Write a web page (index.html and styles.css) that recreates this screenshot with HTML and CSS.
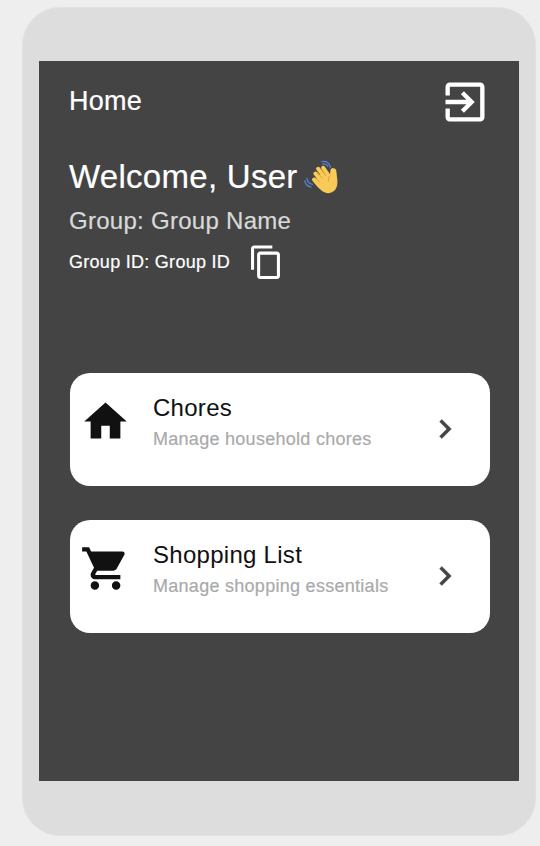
FILE: index.html
```html
<!DOCTYPE html>
<html lang="en">
<head>
<meta charset="utf-8">
<title>Home</title>
<link rel="stylesheet" href="styles.css">
</head>
<body>
<div class="phone">
  <main class="screen">
    <header class="topbar">
      <h1 class="topbar-title">Home</h1>
      <svg class="exit" viewBox="0 0 24 24"><path d="M10.09 15.59L11.5 17l5-5-5-5-1.41 1.41L12.67 11H3v2h9.67l-2.58 2.59zM19 3H5c-1.11 0-2 .9-2 2v4h2V5h14v14H5v-4H3v4c0 1.1.89 2 2 2h14c1.1 0 2-.9 2-2V5c0-1.1-.9-2-2-2z"/></svg>
    </header>
    <section class="intro">
      <div class="welcome"><h2 class="welcome-text">Welcome, User</h2>
        <svg class="wave" viewBox="24 27 105 105">
          <g class="hand">
            <path d="M57 92 L75 70 L103 77 L104 62 Q105 53 113 54 Q122 55 122 64 L125 91 Q126 111 116 121 Q100 134 82 123 Q75 119 57 98Z"/>
            <path class="finger" d="M83 53L101 79M68 56L91 85M60 70L80 94M56 88L74 108"/>
          </g>
          <path class="crease" d="M77 58L90 76M65 66L81 84M60 82L71 94M103 76Q96 83 98 93"/>
          <path class="motion" d="M79 35Q94 31 102 45Q105 50 104 53M82 42Q92 39 97 49M29 91Q30 106 47 110M35 84Q36 99 51 102"/>
        </svg>
      </div>
      <p class="group">Group: Group Name</p>
      <div class="group-id"><span class="id-text">Group ID: Group ID</span>
        <svg class="copy" viewBox="0 0 24 24"><path d="M16 1H4c-1.1 0-2 .9-2 2v14h2V3h12V1zm3 4H8c-1.1 0-2 .9-2 2v14c0 1.1.9 2 2 2h11c1.1 0 2-.9 2-2V7c0-1.1-.9-2-2-2zm0 16H8V7h11v14z"/></svg>
      </div>
    </section>
    <nav class="cards">
      <div class="card">
        <svg class="card-icon" viewBox="0 0 24 24"><path d="M10 20v-6h4v6h5v-8h3L12 3 2 12h3v8z"/></svg>
        <div class="card-body"><h3 class="card-title">Chores</h3><p class="card-note">Manage household chores</p></div>
        <svg class="chevron" viewBox="0 0 24 24"><path d="M10 6L8.59 7.41 13.17 12l-4.58 4.59L10 18l6-6z"/></svg>
      </div>
      <div class="card">
        <svg class="card-icon" viewBox="0 0 24 24"><path d="M7 18c-1.1 0-1.99.9-1.99 2S5.9 22 7 22s2-.9 2-2-.9-2-2-2zM1 2v2h2l3.6 7.59-1.35 2.45c-.16.28-.25.61-.25.96 0 1.1.9 2 2 2h12v-2H7.42c-.14 0-.25-.11-.25-.25l.03-.12.9-1.63h7.45c.75 0 1.41-.41 1.75-1.03l3.58-6.49c.08-.14.12-.31.12-.48 0-.55-.45-1-1-1H5.21l-.94-2H1zm16 16c-1.1 0-1.99.9-1.99 2s.89 2 1.99 2 2-.9 2-2-.9-2-2-2z"/></svg>
        <div class="card-body"><h3 class="card-title">Shopping List</h3><p class="card-note">Manage shopping essentials</p></div>
        <svg class="chevron" viewBox="0 0 24 24"><path d="M10 6L8.59 7.41 13.17 12l-4.58 4.59L10 18l6-6z"/></svg>
      </div>
    </nav>
  </main>
</div>
</body>
</html>
```
FILE: styles.css
```css
* { box-sizing: border-box; margin: 0; }
body {
  width: 540px;
  height: 846px;
  padding: 7px 0 0 22px;
  overflow: hidden;
  background: #eee;
  font-family: "Liberation Sans", Arial, sans-serif;
  letter-spacing: 0.28px;
}
h1, h2, h3 { font-weight: 400; }
svg { display: block; flex: none; fill: currentColor; }
.phone {
  width: 514px;
  height: 829px;
  padding: 53px 16px;
  border: 1px solid #e2e2e2;
  border-radius: 38px;
  background: #ddd;
}
.screen {
  width: 480px;
  height: 720px;
  padding: 14px 29px 0 30px;
  background: #444;
  color: #fff;
  -webkit-text-stroke: 0.2px;
}
.topbar {
  display: flex;
  justify-content: space-between;
  height: 52px;
  margin-right: -0.7px;
}
.topbar-title { padding-top: 10px; font-size: 27px; line-height: 32px; }
.exit { width: 52px; height: 52px; margin-top: 0.6px; }
.intro { padding-top: 30px; }
.welcome { display: flex; height: 42px; }
.welcome-text { width: 234px; font-size: 33px; line-height: 40px; white-space: nowrap; }
.wave { width: 36px; height: 35.5px; margin-top: 1.5px; }
.hand { fill: #f8ca58; }
.finger { fill: none; stroke: #f8ca58; stroke-width: 12; stroke-linecap: round; }
.crease { fill: none; stroke: #d99b36; stroke-width: 2.5; stroke-linecap: round; }
.motion { fill: none; stroke: #5685de; stroke-width: 3.5; stroke-linecap: round; }
.group { margin-top: 7px; font-size: 24px; line-height: 30px; color: #d9d9d9; }
.group-id { display: flex; height: 37px; margin-top: 7px; }
.id-text { width: 178.5px; padding-top: 8px; font-size: 18px; line-height: 22px; }
.copy { width: 36.5px; height: 36.5px; margin-top: 0.6px; }
.cards { display: grid; gap: 34px; margin: 93px 0 0 1px; }
.card {
  display: flex;
  height: 113px;
  padding: 23px 26.5px 0 10px;
  border-radius: 20px;
  background: #fff;
  color: #111;
  -webkit-text-stroke: 0;
}
.card-icon { width: 51px; height: 51px; }
.card-body { flex: 1; padding-left: 22px; }
.card-title { margin-top: -1px; font-size: 24px; line-height: 26px; }
.card-note { margin-top: 7px; font-size: 18px; line-height: 22px; color: #aaa; -webkit-text-stroke: 0.2px; }
.chevron {
  width: 38px;
  height: 38px;
  margin-top: 13.5px;
  color: #444;
  stroke: currentColor;
  stroke-width: 0.3;
}
```
